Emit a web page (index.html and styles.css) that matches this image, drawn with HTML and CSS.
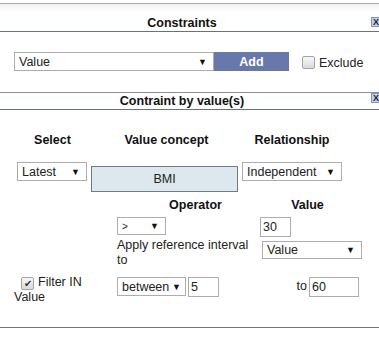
FILE: index.html
```html
<!DOCTYPE html>
<html lang="en">
<head>
  <meta charset="UTF-8">
  <title>Constraints</title>
  <link rel="stylesheet" href="styles.css">
</head>
<body>

<div class="panel panel-first">
  <div class="panel-head big">
    <span class="title">Constraints</span>
    <span class="close">X</span>
  </div>
  <div class="add-row">
    <div class="dd dd-main"><span>Value</span><i>&#9660;</i></div>
    <button class="btn-add">Add</button>
    <label class="chk-label"><span class="chk"></span>Exclude</label>
  </div>
</div>

<div class="panel panel-second">
  <div class="panel-head small">
    <span class="title">Contraint by value(s)</span>
    <span class="close">X</span>
  </div>
  <div class="value-body">
    <div class="row cols-top labels">
      <b>Select</b>
      <b>Value concept</b>
      <b>Relationship</b>
    </div>
    <div class="row cols-top fields">
      <div class="cell"><div class="dd dd-latest"><span>Latest</span><i>&#9660;</i></div></div>
      <div class="cell"><div class="concept">BMI</div></div>
      <div class="cell"><div class="dd dd-rel"><span>Independent</span><i>&#9660;</i></div></div>
    </div>
    <div class="row cols-low labels op-labels">
      <span></span>
      <b>Operator</b>
      <b>Value</b>
    </div>
    <div class="row cols-low op-fields">
      <span></span>
      <div class="cell"><div class="dd dd-op"><span>&gt;</span><i>&#9660;</i></div></div>
      <div class="cell"><input class="txt txt-val" type="text" value="30"></div>
    </div>
    <div class="row cols-low ref-row">
      <span></span>
      <div class="ref-text">Apply reference interval to</div>
      <div class="cell"><div class="dd dd-apply"><span>Value</span><i>&#9660;</i></div></div>
    </div>
    <div class="row cols-low filter-row">
      <label class="filter-label"><span class="chk checked">&#10004;</span>Filter IN<br>Value</label>
      <div class="cell inline">
        <div class="dd dd-between"><span>between</span><i>&#9660;</i></div>
        <input class="txt txt-from" type="text" value="5">
      </div>
      <div class="cell inline to-cell">
        <span class="to">to</span>
        <input class="txt txt-to" type="text" value="60">
      </div>
    </div>
  </div>
</div>

</body>
</html>
```

FILE: styles.css
```css
* { box-sizing: border-box; margin: 0; padding: 0; }
body {
  background: #fff;
  font-family: "Liberation Sans", Arial, sans-serif;
  font-size: 12px;
  color: #222;
  overflow: hidden;
  width: 379px;
  height: 340px;
}

/* panels */
.panel-first { margin-top: 3px; border-top: 1px solid #a8a8a8; }
.panel-second { border-top: 1px solid #8c9499; border-bottom: 1px solid #6f787d; height: 236px; }

.panel-head {
  position: relative;
  text-align: center;
  padding-right: 15px;
  font-weight: bold;
  color: #111;
  border-bottom: 1px solid #67737a;
}
.panel-head.big {
  height: 28px;
  padding-top: 11px;
  line-height: 16px;
  font-size: 12.5px;
  background: linear-gradient(#f2f2f2, #fff 30%);
}
.panel-head.small {
  height: 17px;
  line-height: 16px;
  font-size: 12.5px;
}
.close {
  position: absolute;
  right: -4px;
  width: 12px;
  height: 10px;
  background: #c4cfe2;
  border: 1px solid #8594b3;
  font-size: 9px;
  line-height: 8px;
  text-align: left;
  padding-left: 1px;
  color: #223;
  font-weight: bold;
}
.big .close { top: 13px; }
.small .close { top: 0; }

/* first panel row */
.add-row {
  display: flex;
  align-items: flex-start;
  padding: 20px 0 21px 14px;
}

/* fake dropdowns */
.dd {
  display: flex;
  align-items: center;
  justify-content: space-between;
  height: 19px;
  border: 1px solid #adadad;
  background: #fff;
  padding: 0 6px 0 4px;
  font-size: 12.5px;
  color: #222;
}
.dd i {
  font-style: normal;
  font-size: 9px;
  color: #111;
}
.dd-main { width: 200px; }
.dd-latest { width: 70px; margin-left: 3px; }
.dd-rel { width: 100px; }
.dd-op { width: 49px; height: 18px; font-size: 10px; }
.dd-apply { width: 100px; height: 18px; margin-left: 2px; }
.dd-between { width: 69px; padding-right: 4px; }

.btn-add {
  width: 75px;
  height: 19px;
  border: none;
  background: #6878ab;
  color: #fff;
  font-family: inherit;
  font-weight: bold;
  font-size: 12.5px;
}

.chk-label {
  display: flex;
  align-items: center;
  margin: 4px 0 0 13px;
  font-size: 12.5px;
}
.chk-label .chk { margin-top: -2px; }
.chk {
  display: inline-block;
  width: 13px;
  height: 13px;
  border: 1px solid #a5a5a5;
  border-radius: 2px;
  background: linear-gradient(#f7f7f7, #dadada);
  margin-right: 4px;
  font-size: 10px;
  line-height: 11px;
  text-align: center;
  color: #333;
}

/* second panel grid */
.value-body { padding: 23px 0 0 14px; }
.row { display: grid; }
.cols-top { grid-template-columns: 77px 151px 100px; }
.cols-low { grid-template-columns: 103px 143px 101px; }

.labels b {
  text-align: center;
  font-size: 12.5px;
  color: #111;
  line-height: 15px;
}
.fields { margin-top: 14px; height: 29px; }
.concept {
  margin-top: 4px;
  width: 147px;
  height: 26px;
  border: 1px solid #6e7d84;
  background: #dce8ee;
  text-align: center;
  line-height: 24px;
  font-size: 12.5px;
}
.op-labels { margin-top: 7px; }
.op-labels b:nth-child(2) { padding-left: 14px; }
.op-labels b:last-child { padding-right: 6px; }
.op-fields { margin-top: 4px; height: 21px; }

.txt {
  height: 20px;
  border: 1px solid #adadad;
  padding: 0 2px;
  font-family: inherit;
  font-size: 12.5px;
  color: #222;
  outline: none;
}
.txt-val { width: 31px; }
.txt-from { width: 31px; margin-left: 2px; }
.txt-to { width: 50px; margin-left: 2px; }

.ref-row { margin-top: 0; height: 37px; }
.ref-text {
  font-size: 12.5px;
  line-height: 15px;
  padding-top: 0;
  padding-right: 6px;
}
.dd-apply { margin-top: 3px; }

.filter-row { margin-top: 0; }
.filter-label {
  font-size: 12.5px;
  line-height: 15px;
}
.filter-label .chk { margin: 0 4px 0 7px; vertical-align: -1px; }
.inline { display: flex; align-items: flex-start; padding-top: 2px; }
.to-cell { justify-content: flex-end; padding-right: 2px; }
.to { line-height: 19px; font-size: 12.5px; }
```
